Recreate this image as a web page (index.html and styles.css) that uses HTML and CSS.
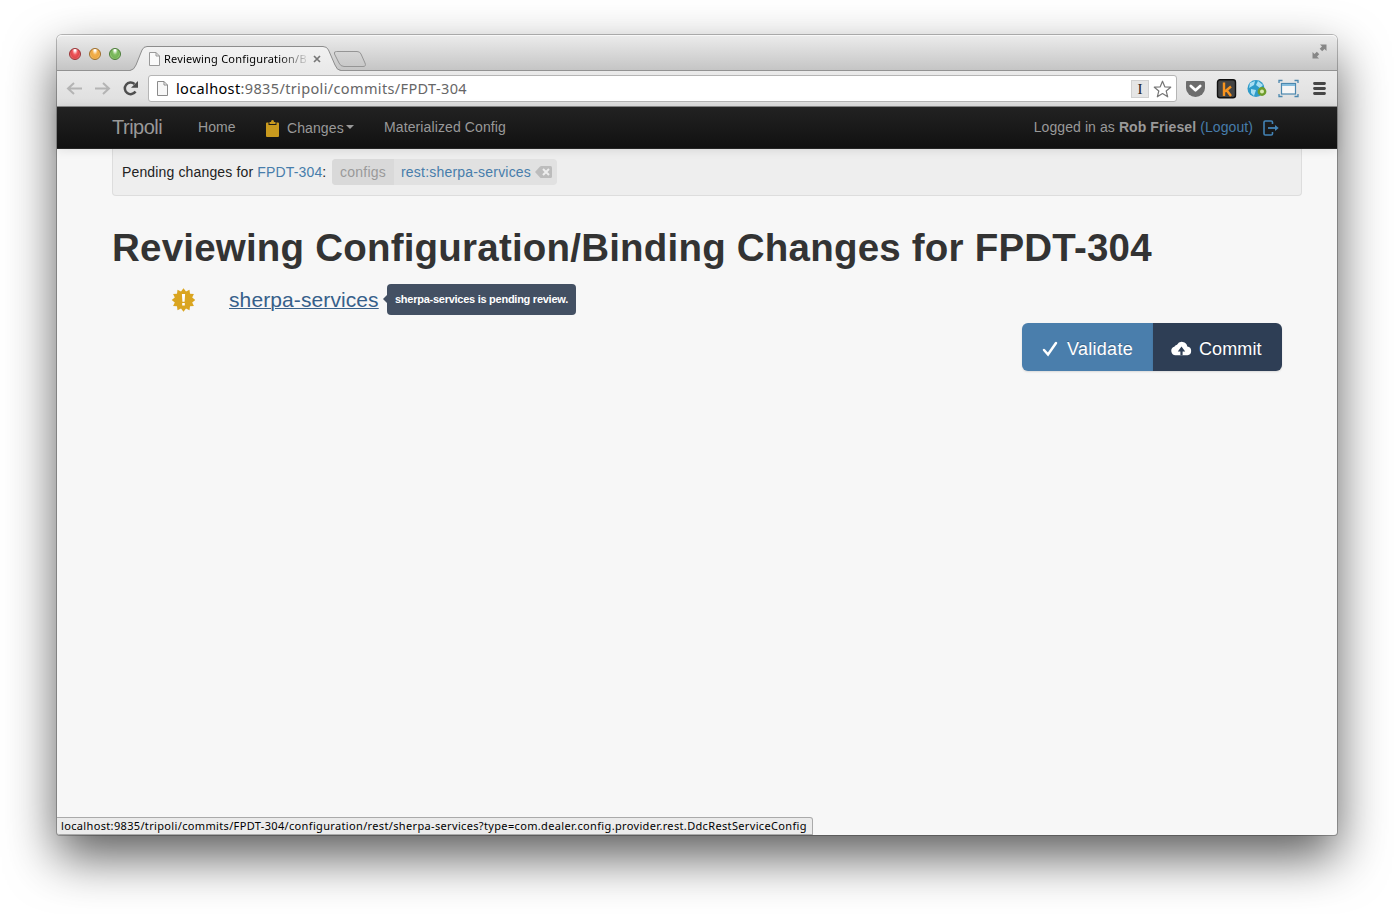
FILE: index.html
```html
<!DOCTYPE html>
<html lang="en">
<head>
<meta charset="utf-8">
<title>Reviewing Configuration/Binding Changes</title>
<link rel="stylesheet" href="styles.css">
</head>
<body>
<div class="window">
  <div class="titlebar">
    <div class="lights"><i class="light red"></i><i class="light amber"></i><i class="light green"></i></div>
    <div class="tab">
      <svg class="tab-shape" width="238" height="26" viewBox="0 0 238 26"><defs><linearGradient id="tg" x2="0" y2="1"><stop stop-color="#f2f2f2"/><stop offset="1" stop-color="#e9e9e9"/></linearGradient><linearGradient id="ng" x2="0" y2="1"><stop stop-color="#d6d6d6"/><stop offset="1" stop-color="#c8c8c8"/></linearGradient></defs><path d="M0 24.5Q4 24 6 19L12 4Q13.500 .5 17 .5H193Q197 .5 198.500 4L205 19Q207 24.500 211 24.500V26H0Z" fill="url(#tg)"/><path d="M0 24.500Q4 24 6 19L12 4Q13.500 .5 17 .5H193Q197 .5 198.500 4L205 19Q207 24.500 211 24.500" fill="none" stroke="#8d8d8d"/><path d="M206.500 5.500H227Q230 5.500 231 8L235 17Q236.500 20.500 233 20.500H214Q210.500 20.500 209 17L204.500 8Q203.500 5.500 206.500 5.500Z" fill="url(#ng)" stroke="#959595"/></svg>
      <svg class="page" width="11" height="14" viewBox="0 0 11 14"><path d="M.5.5H7L10.500 4V13.500H.5ZM7 .5V4H10.500" fill="#fafafa" stroke="#999"/></svg>
      <span class="tab-text">Reviewing Configuration/B</span>
      <svg class="close" width="8" height="8" viewBox="0 0 8 8"><path d="M1 1 7 7M7 1 1 7" stroke="#777" stroke-width="1.7"/></svg>
    </div>
    <svg class="expand" width="15" height="15" viewBox="0 0 15 15" fill="#878787"><path d="M8 .5H14.500V7L12.500 5 10.200 7.300 7.700 4.800 10 2.500ZM.5 8V14.500H7L5 12.500 7.300 10.200 4.800 7.700 2.500 10Z"/></svg>
  </div>
  <div class="toolbar">
    <svg class="nav-icons" width="76" height="18" viewBox="0 0 76 18"><g fill="none" stroke="#b4b4b4" stroke-width="2"><path d="M16 8.500H2M8 3 2 8.500l6 5.500M29 8.500H43M37 3 43 8.500l-6 5.500"/></g><path d="M69.500 11.500A5.800 5.800 0 1 1 68.500 4" fill="none" stroke="#4e4e4e" stroke-width="2.500"/><path d="M72 1V7.800H65Z" fill="#4e4e4e"/></svg>
    <div class="address">
      <svg width="11" height="15" viewBox="0 0 11 15"><path d="M.5.5H7L10.500 4V14.500H.5ZM7 .5V4H10.500" fill="#f7f7f7" stroke="#8b8b8b"/></svg>
      <span class="url"><b>localhost</b>:9835/tripoli/commits/FPDT-304</span>
      <span class="instapaper">I</span>
      <svg class="star" width="19" height="18" viewBox="0 0 19 18"><path d="M9.500 1.200 11.800 6.800 17.700 7.200 13.200 11 14.700 16.800 9.500 13.600 4.300 16.800 5.800 11 1.300 7.200 7.200 6.800Z" fill="#fff" stroke="#777" stroke-width="1.200" stroke-linejoin="round"/></svg>
    </div>
    <svg class="ext" width="142" height="20" viewBox="0 0 142 20">
      <path d="M1.500 2H18.500Q20 2 20 3.500V9A9.500 9 0 0 1 1 9V3.500Q1 2 1.500 2Z" fill="#6d6d6d"/><path d="m5.800 7 4.700 4.300L15.200 7" fill="none" stroke="#fff" stroke-width="2.700" stroke-linecap="round" stroke-linejoin="round"/>
      <rect x="32.500" y=".8" width="18" height="18" rx="2.500" fill="#444" stroke="#111" stroke-width="1.400"/><path d="M39 3.500V17M46 7.500 40 12.500M41.500 11 46 17" fill="none" stroke="#f7931e" stroke-width="2.400"/>
      <circle cx="71" cy="9.500" r="8.500" fill="#2e9bc9"/><path d="M65 4 70 2 69 6 64 9ZM73 2 78 6 75 9 71 6ZM66 10 71 11 69 17 66 14Z" fill="#a8dff3"/><circle cx="77" cy="12.500" r="3.200" fill="#d8e8b0" stroke="#6d9c2c" stroke-width="2.400"/>
      <rect x="96.500" y="4.500" width="14" height="10.500" fill="#f6f6f6" stroke="#4b87ae" stroke-width="1.200"/><path d="M97 6H110" stroke="#85bddd" stroke-width="2"/><path d="M94 4V1.500H97.500M109.500 1.500H113V4M113 15V17.500H109.500M97.500 17.500H94V15" fill="none" stroke="#4b87ae" stroke-width="1.300"/>
      <path d="M129.500 4.500H139.500M129.500 9.500H139.500M129.500 14.500H139.500" stroke="#464646" stroke-width="2.800" stroke-linecap="round"/>
    </svg>
  </div>
  <nav class="navbar">
    <span class="brand">Tripoli</span>
    <span class="home">Home</span>
    <span class="changes"><svg width="13" height="18" viewBox="0 0 13 18"><path d="M1 2.500H2.500V5H10.500V2.500H12Q13 2.500 13 3.500V16Q13 17 12 17H1Q0 17 0 16V3.500Q0 2.500 1 2.500Z" fill="#c99a1e"/><path d="M3.500 2H5Q5 0 6.500 0T8 2H9.500V4H3.500Z" fill="#c99a1e"/></svg><span class="changes-text">Changes</span><i class="caret"></i></span>
    <span class="materialized">Materialized Config</span>
    <span class="user">Logged in as <b>Rob Friesel</b> <a>(Logout)</a></span>
    <svg class="logout" width="16" height="16" viewBox="0 0 16 16" fill="none" stroke="#4383b5" stroke-width="1.600"><path d="M9.500 4V2.300Q9.500 1 8.200 1H2.300Q1 1 1 2.300V13.700Q1 15 2.300 15H8.200Q9.500 15 9.500 13.700V12"/><path d="M5 8H14" stroke-width="1.800"/><path d="M12 5 15.700 8 12 11Z" fill="#4383b5" stroke="none"/></svg>
  </nav>
  <main class="page-body">
    <div class="pending">
      <span class="pending-text">Pending changes for <a>FPDT-304</a>:</span>
      <span class="group"><span class="kind">configs</span><span class="entry"><a>rest:sherpa-services</a><svg width="17" height="12" viewBox="0 0 17 12"><path d="M0 6 5 .5Q5.500 0 6.500 0H15.500Q17 0 17 1.500V10.500Q17 12 15.500 12H6.500Q5.500 12 5 11.500Z" fill="#bcbcbc"/><path d="m8 3 6 6M14 3 8 9" stroke="#eee" stroke-width="2"/></svg></span></span>
    </div>
    <h1>Reviewing Configuration/Binding Changes for FPDT-304</h1>
    <div class="item">
      <svg width="24" height="24" viewBox="-12.500 -12 24 24"><path d="M0-11.800 2.500-8.500 6-10.200 6.500-6.300 10.400-5.900 8.700-2.500 11.800 0 8.700 2.500 10.400 5.900 6.500 6.300 6 10.200 2.500 8.500 0 11.800-2.500 8.500-6 10.200-6.500 6.300-10.400 5.900-8.700 2.500-11.800 0-8.700-2.500-10.400-5.900-6.500-6.300-6-10.200-2.500-8.500Z" fill="#daa520"/><path d="M-1.600-6H1.600L1.100 1.800H-1.100ZM-1.300 3H1.300V5.600H-1.300Z" fill="#fff"/></svg>
      <a class="service">sherpa-services</a>
      <span class="tip">sherpa-services is pending review.</span>
    </div>
    <div class="actions">
      <span class="btn validate"><svg width="16" height="16" viewBox="0 0 16 16"><path d="m2 9 4 4.500L14 2" fill="none" stroke="#fff" stroke-width="2.500" stroke-linecap="round"/></svg><span>Validate</span></span>
      <span class="btn commit"><svg width="21" height="15" viewBox="0 0 21 15"><path d="M4.500 14.200A4.300 4.300 0 0 1 3.300 5.800 3.500 3.500 0 0 1 6 3.800 5.500 5.500 0 0 1 16.300 5.500 4.400 4.400 0 0 1 16.500 14.200Z" fill="#fff"/><path d="M9.400 14.200V10.500H6.800L10.500 5.500 14.200 10.500H11.600V14.200Z" fill="#2e3e55"/></svg><span>Commit</span></span>
    </div>
  </main>
  <div class="status">localhost:9835/tripoli/commits/FPDT-304/configuration/rest/sherpa-services?type=com.dealer.config.provider.rest.DdcRestServiceConfig</div>
</div>
</body>
</html>
```
FILE: styles.css
```css
* { box-sizing: border-box; }
body { margin: 0; height: 914px; padding: 35px 57px 0; background: #fff; overflow: hidden; font: 14px/20px "Liberation Sans", sans-serif; }
svg { display: block; flex: none; }
a { color: #477dab; }
.window { position: relative; width: 1280px; height: 800px; background: #f7f7f7; border-radius: 5px 5px 3px 3px; box-shadow: 0 0 0 1px rgba(0,0,0,.25), 0 22px 50px rgba(0,0,0,.64); white-space: nowrap; display: flex; flex-direction: column; }
.titlebar { height: 36px; flex: none; display: flex; background: linear-gradient(#ececec, #c5c5c5); border-radius: 5px 5px 0 0; border-bottom: 1px solid #929292; box-shadow: inset 0 1px #f8f8f8; }
.lights { display: flex; gap: 8px; padding: 13px 0 0 12px; width: 73px; }
.light { width: 12px; height: 12px; border-radius: 50%; border: 1px solid; }
.red { background: radial-gradient(ellipse at 50% 10%, #fff 0 8%, #f0585c 38%, #e0474b 60%, #ffa09b); border-color: #993235; }
.amber { background: radial-gradient(ellipse at 50% 10%, #fff 0 8%, #f3b04b 38%, #eda743 60%, #ffe795); border-color: #9e6d29; }
.green { background: radial-gradient(ellipse at 50% 10%, #fff 0 8%, #80bd62 38%, #74b357 60%, #cef5a5); border-color: #487b36; }
.tab { position: relative; width: 238px; height: 26px; margin-top: 11px; display: flex; align-items: flex-start; padding-left: 19px; }
.tab-shape { position: absolute; left: 0; top: 0; }
.page { position: relative; margin-top: 6px; }
.tab-text { position: relative; margin: 3px 0 0 4px; width: 143px; overflow: hidden; font: 11px/20px "Noto Sans", sans-serif; letter-spacing: .2px; color: #000; -webkit-mask-image: linear-gradient(90deg, #000 115px, rgba(0,0,0,.1) 143px); mask-image: linear-gradient(90deg, #000 115px, rgba(0,0,0,.1) 143px); }
.close { position: relative; margin: 9px 0 0 6px; }
.expand { margin: 9px 10px 0 auto; }
.toolbar { height: 36px; flex: none; display: flex; align-items: flex-start; padding: 4px 10px 0 9px; background: linear-gradient(#eaeaea, #dedede); border-bottom: 1px solid #898989; }
.nav-icons { margin: 5px 6px 0 0; }
.address { width: 1030px; height: 27px; display: flex; align-items: center; padding: 0 4px 0 8px; border: 1px solid #b5b5b5; border-radius: 3px; background: #fff; }
.url { margin: -2px 0 0 8px; font: 14.5px/24px "Noto Sans", sans-serif; letter-spacing: .36px; color: #666; }
.url b { font-weight: 400; color: #000; }
.instapaper { margin-left: auto; width: 18px; height: 18px; background: #e5e5e5; border: 1px solid #d0d0d0; text-align: center; font: 15px/17px "Liberation Serif", serif; color: #222; }
.star { margin-left: 4px; }
.ext { margin: 4px 0 0 8px; }
.navbar { position: relative; z-index: 1; height: 42px; flex: none; display: flex; align-items: flex-start; padding: 10px 58px 0 55px; color: #999; background: linear-gradient(#222, #111); border-bottom: 1px solid #252525; box-shadow: 0 1px 10px rgba(0,0,0,.1); }
.brand { width: 86px; font-size: 20px; letter-spacing: -.5px; }
.home { width: 68px; letter-spacing: .1px; }
.changes { width: 118px; display: flex; letter-spacing: .1px; }
.changes svg { margin-top: 3px; }
.changes-text { margin: 1px 0 0 8px; }
.caret { margin: 8px 0 0 2px; height: 4px; border: 4px solid transparent; border-top-color: #999; border-bottom: 0; }
.materialized { letter-spacing: .11px; }
.user { margin-left: auto; letter-spacing: .09px; }
.logout { margin: 3px 0 0 10px; }
.page-body { height: 686px; padding: 0 35px 0 55px; }
.pending { height: 47px; display: flex; align-items: flex-start; padding: 10px 9px; background: #eee; border: 1px solid #ddd; border-top: 0; border-radius: 0 0 4px 4px; color: #222; }
.pending-text { width: 210px; margin-top: 3px; letter-spacing: .15px; }
.group { display: flex; height: 26px; line-height: 26px; border-radius: 4px; overflow: hidden; background: #e1e1e1; }
.kind { width: 62px; padding-left: 8px; background: #d9d9d9; color: #999; letter-spacing: .25px; }
.entry { width: 163px; padding-left: 7px; display: flex; align-items: center; gap: 4px; letter-spacing: .2px; }
h1 { margin: 32px 0 0; font-size: 38.5px; line-height: 40px; letter-spacing: .21px; color: #333; }
.item { display: flex; align-items: center; height: 31px; margin: 16px 0 0 59px; }
.service { margin-left: 34px; width: 150px; font-size: 21px; line-height: 30px; letter-spacing: .1px; color: #36608a; text-decoration: underline; text-decoration-thickness: 1px; }
.tip { position: relative; margin-left: 8px; width: 189px; height: 31px; padding-left: 8px; border-radius: 4px; background: #435063; color: #fff; font: bold 11px/30px "Liberation Sans", sans-serif; letter-spacing: -.26px; }
.tip::before { content: ""; position: absolute; left: -4px; top: 11px; border: 4px solid transparent; border-right-color: #435063; border-left: 0; }
.actions { display: flex; justify-content: flex-end; margin: 8px 20px 0 0; }
.btn { height: 48px; display: flex; align-items: center; color: #fff; font-size: 18px; padding-top: 3px; text-shadow: 0 -1px rgba(0,0,0,.25); box-shadow: 0 1px 2px rgba(0,0,0,.12); }
.validate { width: 131px; padding-left: 20px; gap: 9px; background: #4a7eac; border-radius: 6px 0 0 6px; letter-spacing: .28px; }
.commit { width: 129px; padding-left: 18px; gap: 7px; background: #2e3e55; border-radius: 0 6px 6px 0; letter-spacing: .1px; }
.status { position: absolute; left: 0; bottom: 0; width: 756px; height: 18px; padding-left: 4px; border: 1px solid #aaa; border-left: 0; border-radius: 0 3px 0 3px; background: #ebebeb; color: #000; font: 11px/16px "Noto Sans", sans-serif; letter-spacing: .346px; }
```
